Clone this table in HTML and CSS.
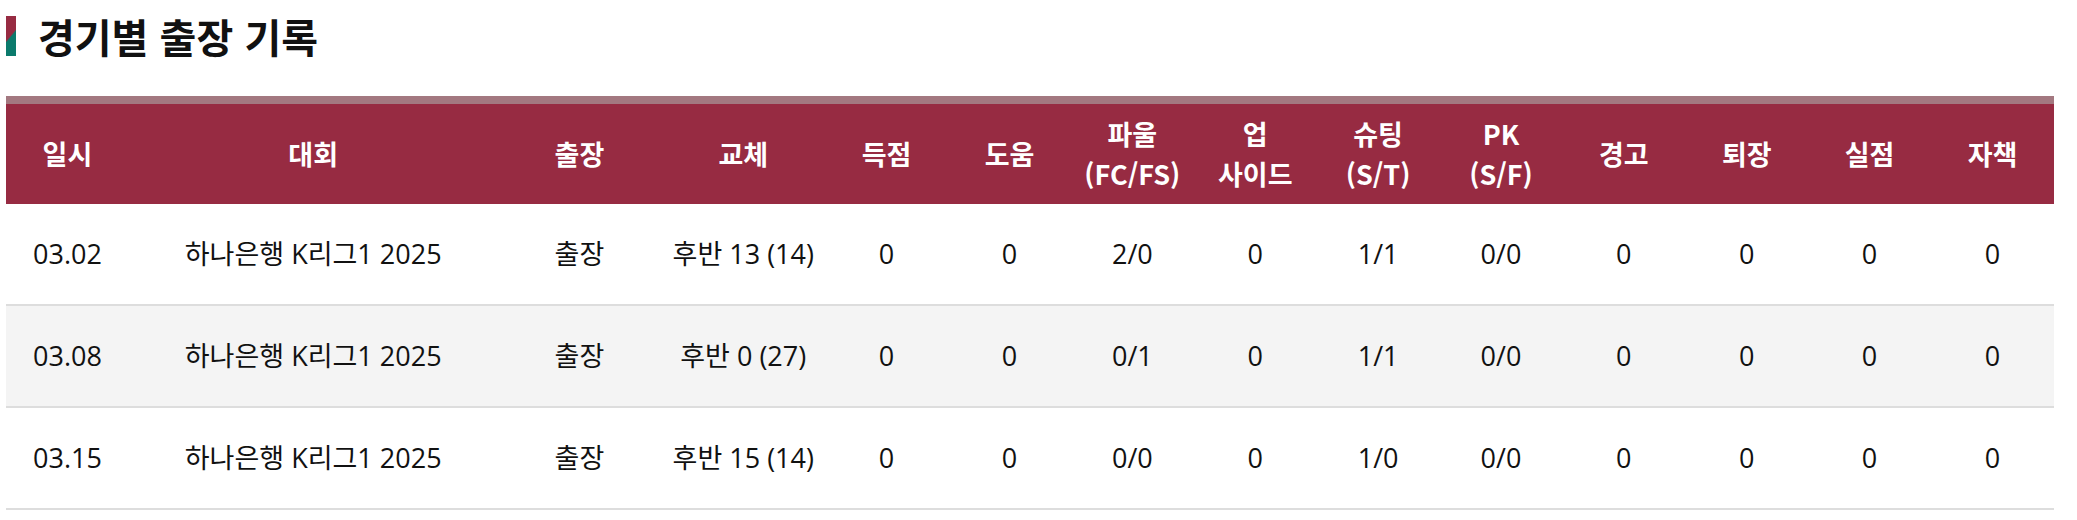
FILE: index.html
```html
<!DOCTYPE html>
<html lang="ko">
<head>
<meta charset="utf-8">
<title>경기별 출장 기록</title>
<link rel="stylesheet" href="styles.css">
</head>
<body>
<div class="wrap">
  <h2 class="title"><span class="title-bar"></span><span class="title-text">경기별 출장 기록</span></h2>
  <div class="table">
    <div class="row head">
      <div class="cell">일시</div>
      <div class="cell">대회</div>
      <div class="cell">출장</div>
      <div class="cell">교체</div>
      <div class="cell">득점</div>
      <div class="cell">도움</div>
      <div class="cell">파울<br>(FC/FS)</div>
      <div class="cell">업<br>사이드</div>
      <div class="cell">슈팅<br>(S/T)</div>
      <div class="cell">PK<br>(S/F)</div>
      <div class="cell">경고</div>
      <div class="cell">퇴장</div>
      <div class="cell">실점</div>
      <div class="cell">자책</div>
    </div>
    <div class="row">
      <div class="cell">03.02</div>
      <div class="cell">하나은행 K리그1 2025</div>
      <div class="cell">출장</div>
      <div class="cell">후반 13 (14)</div>
      <div class="cell">0</div>
      <div class="cell">0</div>
      <div class="cell">2/0</div>
      <div class="cell">0</div>
      <div class="cell">1/1</div>
      <div class="cell">0/0</div>
      <div class="cell">0</div>
      <div class="cell">0</div>
      <div class="cell">0</div>
      <div class="cell">0</div>
    </div>
    <div class="row alt">
      <div class="cell">03.08</div>
      <div class="cell">하나은행 K리그1 2025</div>
      <div class="cell">출장</div>
      <div class="cell">후반 0 (27)</div>
      <div class="cell">0</div>
      <div class="cell">0</div>
      <div class="cell">0/1</div>
      <div class="cell">0</div>
      <div class="cell">1/1</div>
      <div class="cell">0/0</div>
      <div class="cell">0</div>
      <div class="cell">0</div>
      <div class="cell">0</div>
      <div class="cell">0</div>
    </div>
    <div class="row">
      <div class="cell">03.15</div>
      <div class="cell">하나은행 K리그1 2025</div>
      <div class="cell">출장</div>
      <div class="cell">후반 15 (14)</div>
      <div class="cell">0</div>
      <div class="cell">0</div>
      <div class="cell">0/0</div>
      <div class="cell">0</div>
      <div class="cell">1/0</div>
      <div class="cell">0/0</div>
      <div class="cell">0</div>
      <div class="cell">0</div>
      <div class="cell">0</div>
      <div class="cell">0</div>
    </div>
  </div>
</div>
</body>
</html>
```
FILE: styles.css
```css
html, body {
  margin: 0;
  padding: 0;
  background: #ffffff;
}

.wrap {
  width: 2048px;
  margin-left: 6px;
  font-family: "Open Sans", "Noto Sans CJK KR", sans-serif;
  color: #111111;
}

.title {
  display: flex;
  align-items: center;
  gap: 22px;
  margin: 16px 0 40px 0;
  height: 40px;
  font-family: "Noto Sans CJK KR", sans-serif;
  font-weight: 700;
  font-size: 40px;
  line-height: 40px;
  color: #111111;
}

.title-bar {
  display: block;
  flex: none;
  width: 10px;
  height: 40px;
  background: linear-gradient(130deg, #972b42 0%, #972b42 48%, #0b7a6c 52%, #0b7a6c 100%);
}

.title-text {
  display: block;
}

.row {
  display: grid;
  grid-template-columns: 6% 18% 8% 8% repeat(10, 6%);
  align-items: center;
  height: 100px;
  border-bottom: 2px solid #dddddd;
  font-size: 27px;
  line-height: 36px;
  text-align: center;
  background: #ffffff;
}

.row.alt {
  background: #f4f4f4;
}

.row.head {
  border-top: 8px solid #a37880;
  border-bottom: 0;
  background: #972b42;
  color: #ffffff;
  font-family: "Noto Sans CJK KR", sans-serif;
  font-weight: 700;
  font-size: 27px;
  line-height: 40px;
}

.cell {
  white-space: nowrap;
}
```
